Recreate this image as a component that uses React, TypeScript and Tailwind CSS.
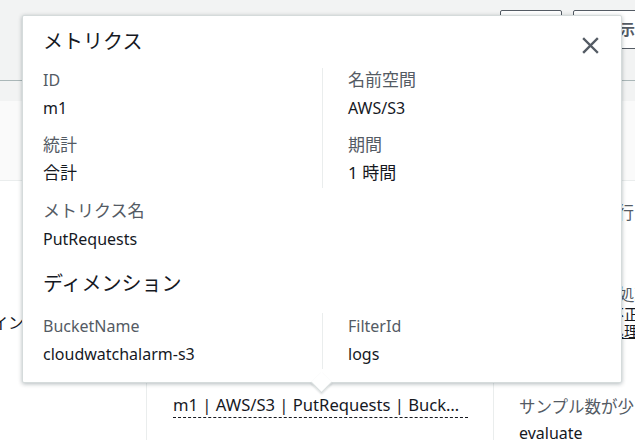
import React from "react";

const font = {
  fontFamily: '"Noto Sans", "Noto Sans CJK JP", sans-serif',
};

function Field({
  label,
  value,
  cjkLabel,
  cjkValue,
}: {
  label: string;
  value: string;
  cjkLabel?: boolean;
  cjkValue?: boolean;
}) {
  return (
    <div className="flex flex-col gap-[6px]">
      <div className={(cjkLabel ? "text-[17px]" : "text-[16px]") + " leading-[22px] text-[#545b64]"}>{label}</div>
      <div className={(cjkValue ? "text-[17px]" : "text-[16px]") + " leading-[22px] text-[#16191f]"}>{value}</div>
    </div>
  );
}

function CloseIcon() {
  return (
    <svg width="17" height="17" viewBox="0 0 17 17" fill="none">
      <path d="M2 2L15 15M15 2L2 15" stroke="#545b64" strokeWidth="2.4" strokeLinecap="square" />
    </svg>
  );
}

export default function App() {
  return (
    <div className="relative w-[635px] h-[440px] overflow-hidden bg-white" style={font}>
      {/* page behind the popover */}
      <div className="h-[81px] bg-[#f2f3f3] border-b border-[#aab7b8] flex justify-end items-start pt-[10px] gap-[11px]">
        <div className="w-[62px] h-[39px] shrink-0 rounded-[2px] border border-[#545b64] bg-white" />
        <div className="w-[84px] h-[39px] shrink-0 -mr-[22px] rounded-[2px] border border-[#545b64] bg-white flex items-center pl-[16px] text-[15px] font-bold text-[#545b64] whitespace-nowrap">
          再表示
        </div>
      </div>
      <div className="h-[20px] bg-[#f2f3f3]" />
      <div className="h-[80px] bg-[#fafafa] border-b border-[#eaeded]" />
      <div className="grid grid-cols-[147px_347px_1fr] h-[257px]">
        <div className="border-r border-[#eaeded] pt-[131px] text-[16px] leading-[22px] text-[#16191f] whitespace-nowrap -ml-[8px]">
          イン
        </div>
        <div className="border-r border-[#eaeded] pt-[212px] pl-[26px]">
          <span className="text-[16.6px] leading-[22px] text-[#16191f] border-b border-dashed border-[#16191f] pb-[1px] pr-[9px] whitespace-nowrap">
            m1 | AWS/S3 | PutRequests | Buck…
          </span>
        </div>
        <div className="flex flex-col pl-[25px] pt-[21px] whitespace-nowrap text-[16.5px] leading-[22px]">
          <div className="text-[#545b64]">アラームを実行</div>
          <div className="mt-[60px] text-[#545b64]">欠落データの処理</div>
          <div className="text-[15px] leading-[17px] text-[#16191f]">欠落データを不正</div>
          <div className="text-[15px] leading-[17px] text-[#16191f]">
            欠落データを<span className="underline">処理</span>
          </div>
          <div className="mt-[56px] text-[#545b64]">サンプル数が少ない場合</div>
          <div className="mt-[4px] text-[16px] text-[#16191f]">evaluate</div>
        </div>
      </div>

      {/* popover */}
      <div className="absolute left-[22px] top-[15px] w-[600px] h-[368px] bg-white border border-[#d5dbdb] rounded-[2px] shadow-[0_1px_4px_rgba(0,28,36,0.3)] px-[20px] pt-[12px]">
        <div className="text-[20px] leading-[28px] text-[#16191f]">メトリクス</div>
        <button className="absolute right-[22px] top-[21px]">
          <CloseIcon />
        </button>
        <div className="grid grid-cols-2 mt-[12px]">
          <div className="flex flex-col gap-[15px] pt-[1px] pb-[4px]">
            <Field label="ID" value="m1" />
            <Field label="統計" value="合計" cjkLabel cjkValue />
          </div>
          <div className="flex flex-col gap-[15px] pt-[1px] pb-[4px] border-l border-[#eaeded] pl-[25px]">
            <Field label="名前空間" value="AWS/S3" cjkLabel />
            <Field label="期間" value="1 時間" cjkLabel cjkValue />
          </div>
        </div>
        <div className="mt-[12px]">
          <Field label="メトリクス名" value="PutRequests" cjkLabel />
        </div>
        <div className="mt-[20px] text-[20px] leading-[28px] text-[#16191f]">ディメンション</div>
        <div className="grid grid-cols-2 mt-[15px]">
          <div className="pt-[2px] pb-[4px]">
            <Field label="BucketName" value="cloudwatchalarm-s3" />
          </div>
          <div className="pt-[2px] pb-[4px] border-l border-[#eaeded] pl-[25px]">
            <Field label="FilterId" value="logs" />
          </div>
        </div>
        <div className="absolute left-[291px] -bottom-[8px] w-[15px] h-[15px] rotate-45 bg-white border-r border-b border-[#d5dbdb] shadow-[1px_1px_2px_rgba(0,28,36,0.15)]" />
      </div>
    </div>
  );
}
